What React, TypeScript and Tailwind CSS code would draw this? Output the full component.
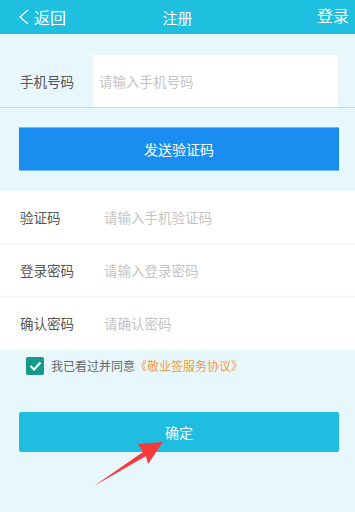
import { useState } from 'react';

const font = { fontFamily: '"Noto Sans CJK SC", "Noto Sans", sans-serif' };

const Header = () => (
  <div className="h-[34px] bg-[#1fbfe0] flex items-center justify-between text-white pl-[18px] pr-[6px] relative">
    <div className="flex items-center gap-[5px]">
      <svg width="11" height="16" viewBox="0 0 11 16" fill="none">
        <path d="M10 1L2 8l8 7" stroke="white" strokeWidth="1.2" />
      </svg>
      <span className="text-[16px] leading-none">返回</span>
    </div>
    <span className="absolute left-1/2 -translate-x-1/2 text-[15px] leading-none">注册</span>
    <span className="text-[16px] leading-none mb-[5px]">登录</span>
  </div>
);

const Row = ({ label, placeholder, last }: { label: string; placeholder: string; last?: boolean }) => (
  <div className={`h-[53px] flex items-center pl-[20px] ${last ? '' : 'border-b border-[#eef6fa]'}`}>
    <span className="w-[84px] text-[13.5px] text-[#555]">{label}</span>
    <input
      placeholder={placeholder}
      className="flex-1 text-[13.5px] bg-transparent outline-none placeholder:text-[#c4c4c4]"
    />
  </div>
);

export default function App() {
  const [agree, setAgree] = useState(true);

  return (
    <div className="relative w-[355px] h-[512px] bg-[#e8f7fc] overflow-hidden" style={font}>
      <Header />

      {/* phone */}
      <div className="pt-[21px] flex items-center border-b border-[#d3d3d3]">
        <span className="w-[93px] pl-[20px] text-[13.5px] text-[#555]">手机号码</span>
        <input
          placeholder="请输入手机号码"
          className="w-[245px] h-[52px] bg-white px-[6px] text-[13.5px] outline-none placeholder:text-[#c4c4c4]"
        />
      </div>

      <div className="pl-[19px] pr-[16px] mt-[19px]">
        <button className="w-full h-[44px] bg-[#1a8ef0] border-t border-b border-[#6fbdf5] text-white text-[14px]">
          发送验证码
        </button>
      </div>

      <div className="mt-[20px] bg-white">
        <Row label="验证码" placeholder="请输入手机验证码" />
        <Row label="登录密码" placeholder="请输入登录密码" />
        <Row label="确认密码" placeholder="请确认密码" last />
      </div>

      <div className="flex items-center pl-[26px] mt-[7px] gap-[7px]">
        <button
          onClick={() => setAgree(!agree)}
          className={`w-[18px] h-[18px] rounded-[2px] flex items-center justify-center ${agree ? 'bg-[#16998a]' : 'bg-white border border-[#aaa]'}`}
        >
          {agree && (
            <svg width="13" height="10" viewBox="0 0 13 10" fill="none">
              <path d="M1.5 5l3.5 3.5L11.5 1.5" stroke="white" strokeWidth="2" />
            </svg>
          )}
        </button>
        <span className="text-[12px] text-[#666]">
          我已看过并同意<span className="text-[#f29a3a]">《敬业签服务协议》</span>
        </span>
      </div>

      <div className="pl-[19px] pr-[16px] mt-[37px]">
        <button className="w-full h-[40px] rounded-[2px] bg-[#1fbee0] text-white text-[14px]">确定</button>
      </div>

      {/* annotation arrow */}
      <svg className="absolute left-0 top-0 pointer-events-none" width="355" height="512">
        <polygon points="163,442 138,444 143,452 94,486 146,456 148,464" fill="#f53a3a" />
      </svg>
    </div>
  );
}
